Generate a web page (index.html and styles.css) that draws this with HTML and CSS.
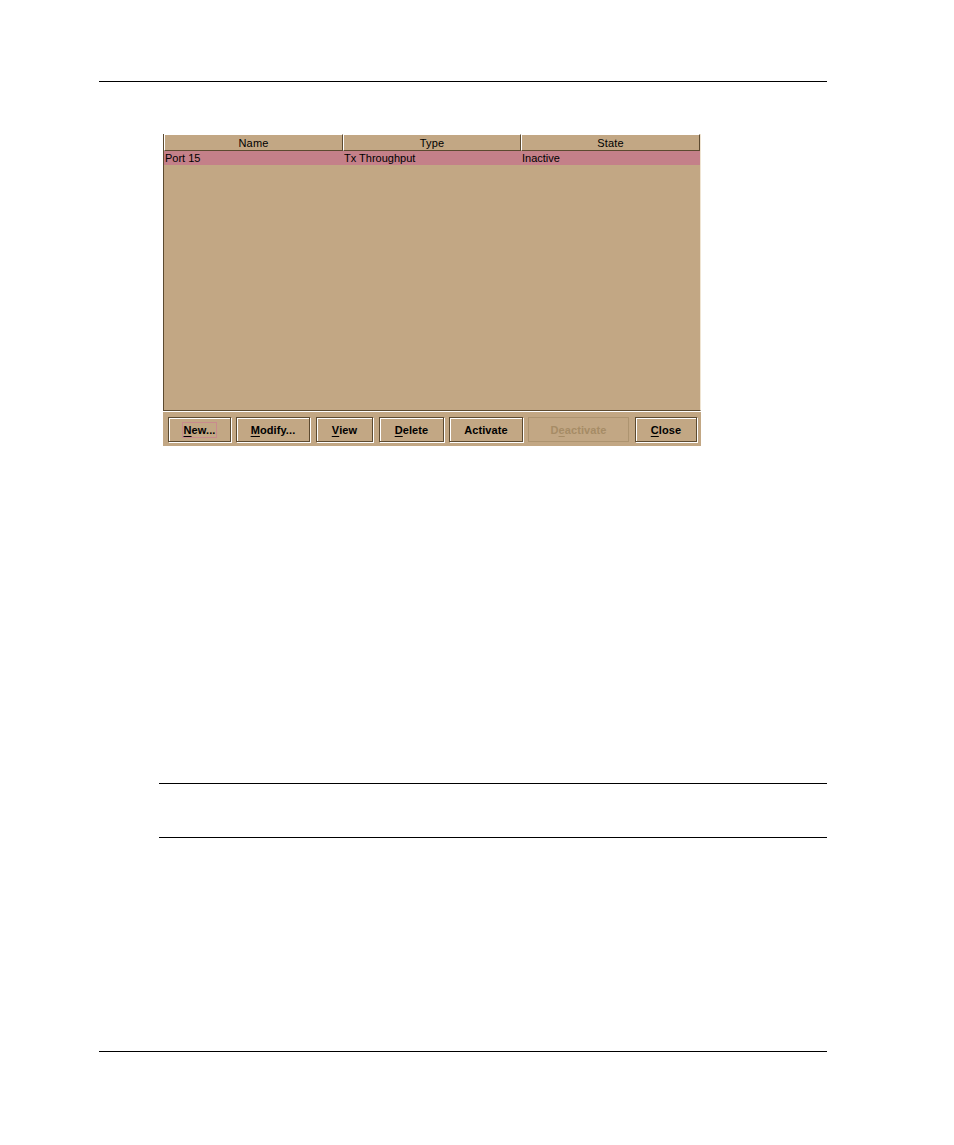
FILE: index.html
```html
<!DOCTYPE html>
<html>
<head>
<meta charset="utf-8">
<link rel="stylesheet" href="styles.css">
</head>
<body>
<div class="page">
  <div class="rule rule-top"></div>
  <div class="panel">
    <div class="table">
      <div class="thead">
        <div class="th th-name">Name</div>
        <div class="th th-type">Type</div>
        <div class="th th-state">State</div>
      </div>
      <div class="tbody">
        <div class="tr selected">
          <div class="td td-name">Port 15</div>
          <div class="td td-type">Tx Throughput</div>
          <div class="td td-state">Inactive</div>
        </div>
      </div>
    </div>
    <div class="buttons">
      <div class="btn btn-new"><span class="focus"><u>N</u>ew...</span></div>
      <div class="btn btn-modify"><u>M</u>odify...</div>
      <div class="btn btn-view"><u>V</u>iew</div>
      <div class="btn btn-delete"><u>D</u>elete</div>
      <div class="btn btn-activate">Activate</div>
      <div class="btn btn-deactivate disabled">D<u>e</u>activate</div>
      <div class="btn btn-close"><u>C</u>lose</div>
    </div>
  </div>
  <div class="rule rule-mid1"></div>
  <div class="rule rule-mid2"></div>
  <div class="rule rule-bottom"></div>
</div>
</body>
</html>
```

FILE: styles.css
```css
html, body {
  margin: 0;
  padding: 0;
  background: #ffffff;
}

.page {
  width: 954px;
  height: 1145px;
  overflow: hidden;
  font-family: "Liberation Sans", Arial, sans-serif;
  padding-top: 1px;
  box-sizing: border-box;
}

.rule {
  height: 0;
  border-top: 1px solid #000;
}

.rule-top {
  margin: 80px 0 0 99px;
  width: 728px;
}

.rule-mid1 {
  margin: 337px 0 0 159px;
  width: 668px;
}

.rule-mid2 {
  margin: 53px 0 0 159px;
  width: 668px;
}

.rule-bottom {
  margin: 213px 0 0 99px;
  width: 728px;
}

.panel {
  margin: 52px 0 0 163px;
  width: 538px;
  height: 312px;
  background: #c2a784;
  display: flex;
  flex-direction: column;
}

.table {
  height: 277px;
  border-left: 1px solid #5c4a30;
  border-right: 1px solid #efe4d2;
  border-bottom: 1px solid #5c4a30;
  box-sizing: border-box;
  display: flex;
  flex-direction: column;
}

.thead {
  display: flex;
  height: 17px;
}

.th {
  box-sizing: border-box;
  height: 17px;
  border-top: 1px solid #ffffff;
  border-left: 1px solid #ffffff;
  border-right: 1px solid #5c4a30;
  border-bottom: 1px solid #5c4a30;
  font-size: 11px;
  line-height: 17px;
  text-align: center;
  color: #000;
  letter-spacing: 0.2px;
  overflow: hidden;
}

.th-name { width: 179px; }
.th-type { width: 178px; }
.th-state { width: 179px; }

.tbody {
  flex: 1;
}

.tr {
  display: flex;
  height: 14px;
}

.tr.selected {
  background: #c48089;
}

.td {
  box-sizing: border-box;
  font-size: 11px;
  line-height: 14px;
  color: #000;
  padding-left: 1px;
  white-space: nowrap;
}

.td-name { width: 179px; }
.td-type { width: 178px; }
.td-state { width: 179px; }

.buttons {
  flex: 1;
  border-top: 1px solid #ffffff;
  display: flex;
  align-items: flex-start;
  padding: 5px 0 0 5px;
}

.btn {
  box-sizing: border-box;
  height: 25px;
  border: 1px solid #5c4a30;
  box-shadow: inset 1px 1px 0 #ffffff, 1px 1px 0 #ffffff;
  font-size: 11px;
  font-weight: bold;
  color: #000;
  display: flex;
  align-items: center;
  justify-content: center;
  margin-right: 5px;
  white-space: nowrap;
  letter-spacing: 0.1px;
}

.btn u {
  text-decoration-thickness: 1px;
  text-underline-offset: 2px;
}

.focus {
  border: 1px solid #c98a8e;
  padding: 1px;
}

.btn-new { width: 63px; }
.btn-modify { width: 74px; margin-right: 6px; }
.btn-view { width: 57px; margin-right: 6px; }
.btn-delete { width: 65px; }
.btn-activate { width: 74px; }
.btn-deactivate { width: 101px; margin-right: 6px; }
.btn-close { width: 62px; margin-right: 0; }

.btn.disabled {
  color: #a68c66;
  border-color: #ad9470;
  box-shadow: none;
}
```
